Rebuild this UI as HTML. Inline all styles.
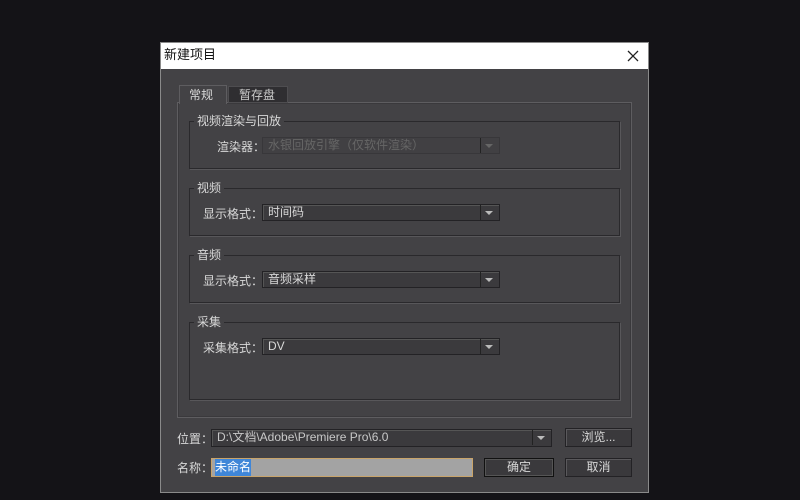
<!DOCTYPE html>
<html><head><meta charset="utf-8"><style>
*{margin:0;padding:0;box-sizing:border-box}
body{width:800px;height:500px;background:#141317;position:relative;overflow:hidden;font-family:"Liberation Sans","Noto Sans CJK SC",sans-serif;font-size:12px;color:#d8d8d8}
.a{position:absolute}
#dlg{left:160px;top:42px;width:489px;height:451px;background:#434245;border:1px solid #8a8a8a}
#title{left:0;top:0;width:487px;height:26px;background:#fff;color:#111;font-size:13px;line-height:24px;padding-left:3px}
.panel{border:1px solid #5e5d60;box-shadow:inset 0 0 0 1px #3a393c}
.grp{border:1px solid #2a292c;box-shadow:1px 1px 0 #58575a}
.leg{background:#434245;padding:0 3px;font-size:12px;line-height:14px}
.dd{background:#3b3a3d;border:1px solid #232225;box-shadow:inset 1px 1px 0 #555;font-size:12px;line-height:15px;padding-left:5px}
.dd:after{content:"";position:absolute;right:0;top:0;width:18px;height:15px;border-left:1px solid #222}
.arr{position:absolute;right:6px;top:6px;width:0;height:0;border-left:4px solid transparent;border-right:4px solid transparent;border-top:4px solid #bbb}
.btn{background:#3a393c;border:1px solid #232225;box-shadow:inset 1px 1px 0 #5a595c;text-align:center;line-height:16px;font-size:12px}
</style></head><body>
<div id="dlg" class="a">
<div id="title" class="a">新建项目</div>
<svg class="a" style="left:465px;top:6px" width="14" height="14"><path d="M2 2L12 12M12 2L2 12" stroke="#222" stroke-width="1.3"/></svg>
<div class="a panel" style="left:16px;top:59px;width:455px;height:316px"></div>
<div class="a" style="left:18px;top:42px;width:48px;height:19px;background:#434245;border:1px solid #5e5d60;border-bottom:none;line-height:18px;padding-left:9px">常规</div>
<div class="a" style="left:67px;top:43px;width:60px;height:17px;background:#2f2e31;border:1px solid #4e4d50;line-height:16px;padding-left:10px;color:#ccc">暂存盘</div>

<div class="a grp" style="left:28px;top:78px;width:431px;height:48px"></div>
<div class="a leg" style="left:33px;top:71px">视频渲染与回放</div>
<div class="a" style="left:56px;top:95px">渲染器：</div>
<div class="a dd" style="left:101px;top:94px;width:238px;height:17px;color:#666;background:#414043;border-color:#38373a;box-shadow:none">水银回放引擎（仅软件渲染）<div class="arr" style="border-top-color:#666"></div></div>

<div class="a grp" style="left:28px;top:145px;width:431px;height:48px"></div>
<div class="a leg" style="left:33px;top:138px">视频</div>
<div class="a" style="left:42px;top:162px">显示格式：</div>
<div class="a dd" style="left:101px;top:161px;width:238px;height:17px">时间码<div class="arr"></div></div>

<div class="a grp" style="left:28px;top:212px;width:431px;height:48px"></div>
<div class="a leg" style="left:33px;top:205px">音频</div>
<div class="a" style="left:42px;top:229px">显示格式：</div>
<div class="a dd" style="left:101px;top:228px;width:238px;height:17px">音频采样<div class="arr"></div></div>

<div class="a grp" style="left:28px;top:279px;width:431px;height:78px"></div>
<div class="a leg" style="left:33px;top:272px">采集</div>
<div class="a" style="left:42px;top:296px">采集格式：</div>
<div class="a dd" style="left:101px;top:295px;width:238px;height:17px">DV<div class="arr"></div></div>

<div class="a" style="left:16px;top:387px">位置：</div>
<div class="a dd" style="left:50px;top:386px;width:341px;height:18px;color:#c8c8c8">D:\文档\Adobe\Premiere Pro\6.0<div class="arr"></div></div>
<div class="a btn" style="left:404px;top:385px;width:67px;height:19px">浏览...</div>

<div class="a" style="left:16px;top:416px">名称：</div>
<div class="a" style="left:50px;top:415px;width:262px;height:19px;background:#a3a3a3;border:1px solid #c9a46a"><span style="background:#3f86d8;color:#fff;margin-left:3px;line-height:17px;display:inline-block">未命名</span></div>
<div class="a btn" style="left:323px;top:415px;width:70px;height:19px;border-color:#111;box-shadow:inset 0 0 0 1px #555">确定</div>
<div class="a btn" style="left:404px;top:415px;width:67px;height:19px">取消</div>
</div>
</body></html>
